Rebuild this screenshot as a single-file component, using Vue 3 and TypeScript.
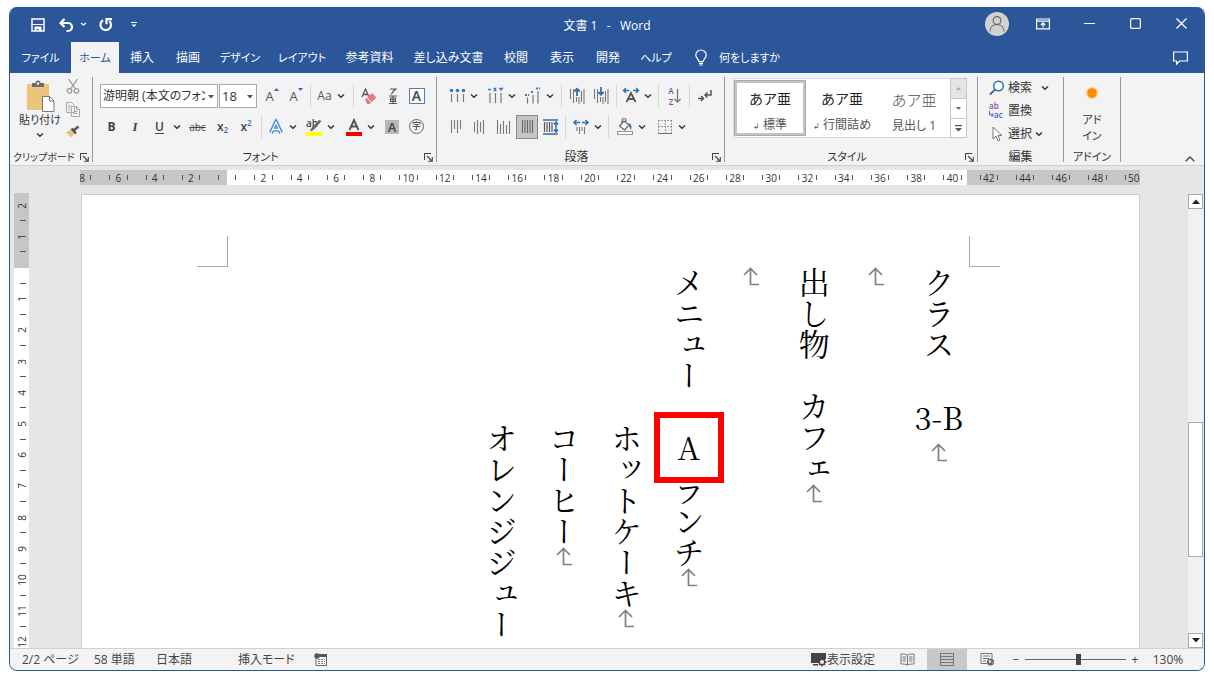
<script setup lang="ts">
import { ref } from 'vue'

interface Column { indent: boolean; parts: { text: string; kind?: 'upright' | 'marked' }[]; end: boolean }

const tabs = ['ファイル', 'ホーム', '挿入', '描画', 'デザイン', 'レイアウト', '参考資料', '差し込み文書', '校閲', '表示', '開発', 'ヘルプ']
const activeTab = ref('ホーム')
const zoom = ref(53)

const isKana = (s: string) => /^[ァ-ー]+$/.test(s)

const hMarks = Array.from({ length: 30 }, (_, i) => Math.abs(i * 2 - 8))
const vMarks = Array.from({ length: 15 }, (_, i) => Math.abs(i - 2))

const columns: Column[] = [
  { indent: false, parts: [{ text: 'クラス　' }, { text: '3-B', kind: 'upright' }], end: true },
  { indent: false, parts: [], end: true },
  { indent: false, parts: [{ text: '出し物　カフェ' }], end: true },
  { indent: false, parts: [], end: true },
  { indent: false, parts: [{ text: 'メニュー　' }, { text: 'A', kind: 'marked' }, { text: 'ランチ' }], end: true },
  { indent: true, parts: [{ text: 'ホットケーキ' }], end: true },
  { indent: true, parts: [{ text: 'コーヒー' }], end: true },
  { indent: true, parts: [{ text: 'オレンジジュー' }], end: false },
]
</script>

<template>
  <svg class="defs" aria-hidden="true">
    <symbol id="chev" viewBox="0 0 8 6"><path d="M1 1.5L4 4.300L7 1.500" fill="none" stroke="#333" stroke-width="1.400" /></symbol>
    <symbol id="launch" viewBox="0 0 9 9"><path d="M.5 7V.5H7M3 3l5 5M8.300 4v4.300H4" fill="none" stroke="#444" stroke-width="1.100" /></symbol>
    <symbol id="ret" viewBox="0 0 18 20"><path d="M2 8L8.500 1.500L15 8M8.500 2V17.500H17" fill="none" stroke="#808080" stroke-width="1.700" /></symbol>
    <symbol id="tri" viewBox="0 0 6 4"><path d="M0 0h6L3 3.500z" fill="#555" /></symbol>
  </svg>
  <div class="window">
    <header class="title">
      <div class="quick">
        <button aria-label="上書き保存"><svg width="14" height="14" viewBox="0 0 14 14"><path d="M1 1h12v12H1z" fill="none" stroke="#fff" stroke-width="1.500" /><path d="M3.500 8.500h7V13h-3v-2h-2v2h-2z" fill="#fff" /><path d="M1.500 6.500h11" stroke="#fff" /></svg></button>
        <button class="undo" aria-label="元に戻す"><svg width="15" height="14" viewBox="0 0 15 14"><path d="M5.500 1L1.500 5l4 4M2 5h7a4 4 0 0 1 0 8H7.500" fill="none" stroke="#fff" stroke-width="2.200" /></svg><svg width="7" height="5" viewBox="0 0 7 5"><path d="M1 1l2.500 2L6 1" fill="none" stroke="#fff" stroke-width="1.200" /></svg></button>
        <button aria-label="繰り返し"><svg width="14" height="14" viewBox="0 0 14 14"><path d="M4 2.200A5.300 5.300 0 1 0 10.500 3M7.500 6.200V1.200H13" fill="none" stroke="#fff" stroke-width="2.200" /></svg></button>
        <button aria-label="カスタマイズ"><svg width="6" height="6" viewBox="0 0 6 6"><path d="M0 0h6v1H0zM.5 2.500h5L3 5z" fill="#fff" /></svg></button>
      </div>
      <h1>文書 1 &nbsp;&nbsp;-&nbsp;&nbsp; Word</h1>
      <div class="controls">
        <button class="user" aria-label="アカウント"><svg width="24" height="24" viewBox="0 0 24 24"><circle cx="12" cy="12" r="12" fill="#d2d2d2" /><circle cx="12" cy="8.500" r="3.900" fill="none" stroke="#666" stroke-width="1.100" /><path d="M5 19.500c0-4.500 3-7 7-7s7 2.500 7 7" fill="none" stroke="#666" stroke-width="1.100" /></svg></button>
        <button aria-label="リボンの表示オプション"><svg width="14" height="12" viewBox="0 0 14 12"><path d="M.6 1h12.800v9.800H.6zM.6 3.200h12.800M7 9.500V5M4.800 7L7 4.800L9.200 7" fill="none" stroke="#fff" stroke-width="1.200" /></svg></button>
        <button aria-label="最小化"><svg width="11" height="11" viewBox="0 0 11 11"><path d="M0 5.500h11" stroke="#fff" stroke-width="1.200" /></svg></button>
        <button aria-label="最大化"><svg width="11" height="11" viewBox="0 0 11 11"><rect x=".6" y=".6" width="9.800" height="9.800" rx="1.500" fill="none" stroke="#fff" stroke-width="1.200" /></svg></button>
        <button aria-label="閉じる"><svg width="11" height="11" viewBox="0 0 11 11"><path d="M.5.5l10 10M10.500.5l-10 10" stroke="#fff" stroke-width="1.300" /></svg></button>
      </div>
    </header>

    <nav class="tabs">
      <button v-for="t in tabs" :key="t" :class="{ active: t === activeTab, kana: isKana(t) }" @click="activeTab = t">{{ t }}</button>
      <button class="tell kana"><svg width="12" height="16" viewBox="0 0 12 16"><path d="M3.800 11.500C3.800 9 .8 8 .8 5.200a5.200 5.200 0 0 1 10.400 0C11.200 8 8.200 9 8.200 11.500zM4 13.300h4M4.500 15h3" fill="none" stroke="#fff" stroke-width="1.200" /></svg>何をしますか</button>
      <button class="comment" aria-label="コメント"><svg width="15" height="14" viewBox="0 0 15 14"><path d="M.6 1h13.800v9H6.500L3.600 13v-3h-3z" fill="none" stroke="#fff" stroke-width="1.200" /></svg></button>
    </nav>

    <section class="ribbon" aria-label="リボン">
      <div class="group clip">
        <div class="body clipbody">
          <button class="paste kana">
            <svg width="30" height="32" viewBox="0 0 30 32"><path d="M2 4h22v26H2z" fill="#ecc47c" /><path d="M7 3h3.500a2.500 2.500 0 0 1 5 0H19v4H7z" fill="#6d6d6d" /><circle cx="13" cy="3.500" r="1.200" fill="#f3f3f3" /><path d="M17.500 16.500h7l4.500 4.500v10.500H17.500z" fill="#fff" stroke="#777" /><path d="M24.500 16.500V21H29" fill="none" stroke="#777" /></svg>
            <span>貼り付け</span>
            <svg width="8" height="6"><use href="#chev" /></svg>
          </button>
          <div class="cliptools">
            <button aria-label="切り取り"><svg width="14" height="15" viewBox="0 0 14 15"><path d="M2.500 0l7 10M11.500 0l-7 10" stroke="#999" stroke-width="1.300" /><circle cx="3.500" cy="11.800" r="2.300" fill="none" stroke="#999" stroke-width="1.200" /><circle cx="10.500" cy="11.800" r="2.300" fill="none" stroke="#999" stroke-width="1.200" /></svg></button>
            <button aria-label="コピー"><svg width="14" height="15" viewBox="0 0 14 15"><path d="M.5.5h5l3 3v7h-8zM5.500 4.500h5l3 3v7h-8z" fill="#f3f3f3" stroke="#a8a8a8" /><path d="M10.500 4.500v3h3M7.500 9.500h4M7.500 11.500h4M2 4h3M2 6h2M2 8h2" fill="none" stroke="#a8a8a8" /></svg></button>
            <button aria-label="書式のコピー"><svg width="15" height="13" viewBox="0 0 15 13"><path d="M1 7.500L6 4.500l3.500 4L6 12.500z" fill="#ecc47c" /><path d="M6.500 3.500l4.500 5M8.500 5.500l5-4" stroke="#555" stroke-width="2.500" /></svg></button>
          </div>
        </div>
        <div class="label"><span>クリップボード</span><button class="launch" aria-label="クリップボードの設定"><svg width="9" height="9"><use href="#launch" /></svg></button></div>
      </div>

      <div class="group font">
        <div class="body rows">
          <div class="row f1">
            <div class="combo name"><select aria-label="フォント"><option>游明朝 (本文のフォント - 日本語)</option></select><svg width="6" height="4"><use href="#tri" /></svg></div>
            <div class="combo size"><select aria-label="フォント サイズ"><option>18</option></select><svg width="6" height="4"><use href="#tri" /></svg></div>
            <button aria-label="フォント サイズの拡大" class="grow">A<svg width="5" height="3" viewBox="0 0 5 3"><path d="M0 3L2.500 0L5 3z" fill="#2f6eb5" /></svg></button>
            <button aria-label="フォント サイズの縮小" class="grow shrink">A<svg width="5" height="3" viewBox="0 0 5 3"><path d="M0 0L2.500 3L5 0z" fill="#2f6eb5" /></svg></button>
            <i class="sep"></i>
            <button class="aa">Aa<svg width="8" height="6"><use href="#chev" /></svg></button>
            <i class="sep"></i>
            <button aria-label="書式のクリア"><svg width="17" height="18" viewBox="0 0 17 18"><path d="M1 10L4.500 2L8 10M2.200 7.500h4.600" fill="none" stroke="#555" stroke-width="1.300" /><path d="M4 12.500L11 6l4.500 4.500l-7 6.500H6z" fill="#e8798b" /><path d="M6 10.700l4.300 4.500" stroke="#f3f3f3" /></svg></button>
            <button aria-label="ルビ"><svg width="12" height="18" viewBox="0 0 12 18"><path d="M3 2h6L6 4.500M6 3.500v2L4 7M2 9h8M2 16.500h8M3.500 11h5v3.500h-5zM3.500 12.700h5M6 9v7.500" fill="none" stroke="#555" stroke-width="1.100" /></svg></button>
            <button aria-label="囲み線"><b class="boxed">A</b></button>
          </div>
          <div class="row f2">
            <button class="bold">B</button><button class="ital">I</button>
            <button class="dd"><span class="under">U</span><svg width="8" height="6"><use href="#chev" /></svg></button>
            <button class="strike">abc</button>
            <button class="xx">x<sub>2</sub></button><button class="xx">x<sup>2</sup></button>
            <i class="sep"></i>
            <button class="dd" aria-label="文字の効果"><svg width="18" height="18" viewBox="0 0 18 18"><path d="M4 15L9 4L14 15M6 11.500h6" fill="none" stroke="#b5d0ef" stroke-width="5" stroke-linejoin="round" /><path d="M4 15L9 4L14 15M6 11.500h6" fill="none" stroke="#3c7fd0" stroke-width="3.400" /><path d="M4 15L9 4L14 15M6 11.500h6" fill="none" stroke="#fff" stroke-width="1.300" /></svg><svg width="8" height="6"><use href="#chev" /></svg></button>
            <button class="dd" aria-label="蛍光ペンの色"><svg width="18" height="18" viewBox="0 0 18 18"><rect x="1" y="14" width="16" height="4" fill="#ff0" /><text x="1" y="9" font-size="10" font-weight="600" fill="#444">ab</text><path d="M16.500 3L10 10.500L7 13H5l1.500-3L14 2z" fill="#666" /></svg><svg width="8" height="6"><use href="#chev" /></svg></button>
            <button class="dd" aria-label="フォントの色"><svg width="18" height="18" viewBox="0 0 18 18"><rect x="1" y="14" width="16" height="4" fill="#f00000" /><path d="M4.500 12L9 2L13.500 12M6 8.500h6" fill="none" stroke="#555" stroke-width="1.900" /></svg><svg width="8" height="6"><use href="#chev" /></svg></button>
            <button aria-label="文字の網かけ"><b class="shade">A</b></button>
            <button aria-label="囲い文字"><span class="circle">字</span></button>
          </div>
        </div>
        <div class="label kana"><span>フォント</span><button class="launch" aria-label="フォントの設定"><svg width="9" height="9"><use href="#launch" /></svg></button></div>
      </div>

      <div class="group para">
        <div class="body rows">
          <div class="row p1">
            <button class="dd" aria-label="箇条書き"><svg width="18" height="18" viewBox="0 0 18 18"><circle cx="3.500" cy="3.500" r="1.800" fill="#3b78be" /><circle cx="9.500" cy="3.500" r="1.800" fill="#3b78be" /><circle cx="15.500" cy="3.500" r="1.800" fill="#3b78be" /><path d="M3.500 7v8M9.500 7v8M15.500 7v8" stroke="#777" stroke-width="1.200" /></svg><svg width="8" height="6"><use href="#chev" /></svg></button>
            <button class="dd" aria-label="段落番号"><svg width="18" height="18" viewBox="0 0 18 18"><path d="M2 2.500h3M7.500 1.500h2l-1 2h2M13 1.500h3l-1.500 2" fill="none" stroke="#3b78be" stroke-width="1.500" /><path d="M4 6v10M9.500 6v10M15 6v10" stroke="#777" stroke-width="1.200" /></svg><svg width="8" height="6"><use href="#chev" /></svg></button>
            <button class="dd" aria-label="アウトライン"><svg width="18" height="18" viewBox="0 0 18 18"><path d="M1 8h4M7 5h3M12 1.500h4" fill="none" stroke="#3b78be" stroke-width="2" stroke-dasharray="2 1" /><path d="M3.500 10.500v6M9 8v8.500M14 4v12.500" stroke="#777" stroke-width="1.200" /></svg><svg width="8" height="6"><use href="#chev" /></svg></button>
            <i class="sep"></i>
            <button aria-label="インデントを減らす"><svg width="16" height="18" viewBox="0 0 16 18"><path d="M1.500 2v10M4.500 2v14M7.500 10v5M10 10v7M12.500 4v11M15 2v15" stroke="#777" stroke-width="1.100" /><path d="M8 9V2M5.300 4.500L8 1.800l2.700 2.700" fill="none" stroke="#2f6eb5" stroke-width="1.800" /></svg></button>
            <button aria-label="インデントを増やす"><svg width="16" height="18" viewBox="0 0 16 18"><path d="M1.500 2v10M4.500 2v14M7.500 10v5M10 10v7M12.500 4v11M15 2v15" stroke="#777" stroke-width="1.100" /><path d="M8 0v7.500M5.300 5L8 7.700L10.700 5" fill="none" stroke="#2f6eb5" stroke-width="1.800" /></svg></button>
            <i class="sep"></i>
            <button class="dd" aria-label="拡張書式"><svg width="18" height="18" viewBox="0 0 18 18"><path d="M4.500 15L9 6L13.500 15M6 12h6" fill="none" stroke="#555" stroke-width="1.800" /><path d="M7 3.500H2M4 1L1.500 3.500L4 6M11 3.500h5M14 1l2.500 2.500L14 6" fill="none" stroke="#2f6eb5" stroke-width="1.400" /></svg><svg width="8" height="6"><use href="#chev" /></svg></button>
            <i class="sep"></i>
            <button aria-label="並べ替え"><span class="az"><span>A</span><span>Z</span></span><svg width="7" height="16" viewBox="0 0 7 16"><path d="M3.500 1v13M.5 11l3 3l3-3" fill="none" stroke="#777" stroke-width="1.300" /></svg></button>
            <i class="sep"></i>
            <button aria-label="編集記号の表示"><svg width="15" height="14" viewBox="0 0 15 14"><path d="M14 1v5H8.500M10.500 3.500L8 6l2.500 2.500M1 9.500h5M4 7l2.500 2.500L4 12" fill="none" stroke="#555" stroke-width="1.500" /></svg></button>
          </div>
          <div class="row p2">
            <button aria-label="上揃え"><svg width="12" height="16" viewBox="0 0 12 16"><path d="M1.500 1v13M4.500 1v9M7.500 1v13M10.500 1v9" stroke="#777" stroke-width="1.100" /></svg></button>
            <button aria-label="上下中央揃え"><svg width="12" height="16" viewBox="0 0 12 16"><path d="M1.500 3v10M4.500 1v14M7.500 3v10M10.500 1v14" stroke="#777" stroke-width="1.100" /></svg></button>
            <button aria-label="下揃え"><svg width="15" height="16" viewBox="0 0 15 16"><path d="M1.500 1v14M4.500 5v10M7.500 2v13M10.500 6v9M13.500 2v13" stroke="#777" stroke-width="1.100" /></svg></button>
            <button class="picked" aria-label="両端揃え" aria-pressed="true"><svg width="13" height="14" viewBox="0 0 13 14"><path d="M1.500 0v13M4 0v13M6.500 0v13M9 0v13M11.500 0v13" stroke="#666" stroke-width="1.100" /></svg></button>
            <button aria-label="均等割り付け"><svg width="16" height="16" viewBox="0 0 16 16"><path d="M0 1h15M0 15h15" stroke="#2f6eb5" stroke-width="1.300" /><path d="M1.500 3v10M4 3v10M6.500 3v10M9 3v10" stroke="#555" stroke-width="1.200" /><path d="M13 3v10M11 5.500L13 3l2 2.500M11 10.500l2 2.500l2-2.500" fill="none" stroke="#2f6eb5" stroke-width="1.500" /></svg></button>
            <i class="sep"></i>
            <button class="dd" aria-label="行と段落の間隔"><svg width="18" height="18" viewBox="0 0 18 18"><path d="M8 4.500H2M4.500 2L2 4.500L4.500 7M10 4.500h6M13.500 2L16 4.500L13.500 7" fill="none" stroke="#2f6eb5" stroke-width="1.500" /><path d="M5 9v4M7.500 9v7M10 9v4M12.500 9v7" stroke="#777" stroke-width="1.100" /></svg><svg width="8" height="6"><use href="#chev" /></svg></button>
            <i class="sep"></i>
            <button class="dd" aria-label="塗りつぶし"><svg width="18" height="18" viewBox="0 0 18 18"><path d="M8 3L3.500 8L8.500 12L13 7zM6 6V2.500a2 2 0 0 1 4 0V5" fill="#fff" stroke="#666" stroke-width="1.200" /><path d="M12.500 5c3 1 3.500 3.500 2.500 7c-1-2-2-3-2-5z" fill="#2f6eb5" /><rect x="1.500" y="13.500" width="15" height="3" fill="#fff" stroke="#999" /></svg><svg width="8" height="6"><use href="#chev" /></svg></button>
            <button class="dd" aria-label="罫線"><svg width="18" height="18" viewBox="0 0 18 18"><path d="M2.500 2v13M9.500 2v13M15.500 2v13M2 2.500h14M2 8.500h14" fill="none" stroke="#999" stroke-dasharray="2 1" /><path d="M2 15.500h14" stroke="#777" /></svg><svg width="8" height="6"><use href="#chev" /></svg></button>
          </div>
        </div>
        <div class="label"><span>段落</span><button class="launch" aria-label="段落の設定"><svg width="9" height="9"><use href="#launch" /></svg></button></div>
      </div>

      <div class="group styles">
        <div class="body">
          <div class="gallery">
            <button class="style on"><span class="sample">あア亜</span><span><small>↲</small> 標準</span></button>
            <button class="style"><span class="sample">あア亜</span><span><small>↲</small> 行間詰め</span></button>
            <button class="style"><span class="sample head">あア亜</span><span>見出し 1</span></button>
            <div class="spin">
              <button class="off" aria-label="前の行"><svg width="5" height="3" viewBox="0 0 5 3"><path d="M0 3L2.500 0L5 3z" fill="#aaa" /></svg></button>
              <button aria-label="次の行"><svg width="5" height="3" viewBox="0 0 5 3"><path d="M0 0L2.500 3L5 0z" fill="#666" /></svg></button>
              <button aria-label="その他"><svg width="7" height="7" viewBox="0 0 7 7"><path d="M0 0h7v1.200H0zM0 3h7L3.500 6.500z" fill="#555" /></svg></button>
            </div>
          </div>
        </div>
        <div class="label kana"><span>スタイル</span><button class="launch" aria-label="スタイルの設定"><svg width="9" height="9"><use href="#launch" /></svg></button></div>
      </div>

      <div class="group edit">
        <div class="body editbody">
          <button><svg width="17" height="16" viewBox="0 0 17 16"><circle cx="10.500" cy="6" r="4.800" fill="#fff" stroke="#2f6eb5" stroke-width="1.500" /><path d="M7 9.500L2 14.500" stroke="#2f6eb5" stroke-width="1.800" /></svg>検索<svg class="far" width="8" height="6"><use href="#chev" /></svg></button>
          <button><svg width="17" height="20" viewBox="0 0 17 20"><text x="1" y="8" font-size="8" font-weight="600" fill="#8b4aa8">ab</text><text x="6" y="17" font-size="8" font-weight="600" fill="#2f6eb5">ac</text><path d="M1.500 10v4H5M3.500 12l2 2l-2 2" fill="none" stroke="#2f6eb5" /></svg>置換</button>
          <button><svg width="17" height="16" viewBox="0 0 17 16"><path d="M5 1v12l3-3l2 5l2-1l-2-4.500h4z" fill="#fff" stroke="#777" /></svg>選択<svg width="8" height="6"><use href="#chev" /></svg></button>
        </div>
        <div class="label"><span>編集</span></div>
      </div>

      <div class="group addin kana">
        <div class="body"><button class="addbtn"><svg width="12" height="12" viewBox="0 0 12 12"><circle cx="6" cy="6" r="6" fill="#fbd49a" /><circle cx="6" cy="6" r="4.800" fill="#ff8c00" /></svg><span>アド<br>イン</span></button></div>
        <div class="label"><span>アドイン</span></div>
      </div>
      <button class="collapse" aria-label="リボンを折りたたむ"><svg width="10" height="6" viewBox="0 0 10 6"><path d="M.7 5.300L5 1l4.300 4.300" fill="none" stroke="#444" stroke-width="1.300" /></svg></button>
    </section>

    <main class="work">
      <div class="hruler" aria-hidden="true">
        <div class="hcells"><div v-for="(n, i) in hMarks" :key="i" :class="{ first: i === 0, last: i === 29 }"><i></i><span>{{ n || '' }}</span><i></i></div></div>
      </div>
      <div class="vruler" aria-hidden="true">
        <div class="vcells"><div v-for="(n, i) in vMarks" :key="i"><span>{{ n || '' }}</span><i></i></div></div>
      </div>
      <article class="page">
        <div class="crop left"></div>
        <div class="crop right"></div>
        <div class="text">
          <p v-for="(c, i) in columns" :key="i" :class="{ indent: c.indent }"><span v-for="(p, j) in c.parts" :key="j" :class="p.kind">{{ p.text }}</span><svg v-if="c.end" width="18" height="20"><use href="#ret" /></svg></p>
        </div>
      </article>
      <div class="scroll">
        <button aria-label="上へスクロール"><svg width="8" height="5" viewBox="0 0 8 5"><path d="M0 5L4 0.500L8 5z" fill="#222" /></svg></button>
        <div class="track"><div class="thumb"></div></div>
        <button aria-label="下へスクロール"><svg width="8" height="5" viewBox="0 0 8 5"><path d="M0 0L4 4.500L8 0z" fill="#222" /></svg></button>
      </div>
    </main>

    <footer class="status">
      <button class="pages">2/2 ページ</button><button class="words">58 単語</button><button class="lang">日本語</button><button class="mode">挿入モード</button>
      <button aria-label="マクロの記録"><svg width="13" height="13" viewBox="0 0 13 13"><path d="M2 3.500h10.500v9H2z" fill="#fff" stroke="#666" /><path d="M5 1h8v3H5z" fill="#555" /><circle cx="3" cy="3" r="2.700" fill="#555" /><path d="M4 6.500h7M4 8.500h7M4 10.500h7" stroke="#777" stroke-dasharray="2 1" /></svg></button>
      <div class="views">
        <button class="disp"><svg width="16" height="15" viewBox="0 0 16 15"><path d="M0 1h15v6H8v4H0zM2 12h5v1.500H2z" fill="#444" /><circle cx="11" cy="10" r="2.800" fill="#f3f3f3" stroke="#444" stroke-width="1.500" /><path d="M11 5.500v2M11 12.500v2M6.500 10h2M13.500 10h2M8 7l1 1M13 12l1 1M14 7l-1 1M9 12l-1 1" stroke="#444" stroke-width="1.400" /></svg>表示設定</button>
        <button class="view" aria-label="閲覧モード"><svg width="15" height="13" viewBox="0 0 15 13"><path d="M7.500 2C6 1 3 1 1 1v10c2 0 5 0 6.500 1C9 11 12 11 14 11V1c-2 0-5 0-6.500 1zM7.500 2v10" fill="none" stroke="#777" /><path d="M2.500 4H6M2.500 6H6M2.500 8H6M9 4h3.500M9 6h3.500M9 8h3.500" stroke="#777" /></svg></button>
        <button class="view cur" aria-label="印刷レイアウト"><svg width="14" height="13" viewBox="0 0 14 13"><path d="M0 .5h14M0 3.500h14M0 6.500h14M0 9.500h14M0 12.500h14M.5 0v13M13.500 0v13" stroke="#777" /></svg></button>
        <button class="view" aria-label="Web レイアウト"><svg width="15" height="13" viewBox="0 0 15 13"><path d="M7 10.500H1V.5h11v5M3 3h7M3 5.500h6M3 8h3" fill="none" stroke="#777" /><circle cx="10.500" cy="9" r="3.500" fill="#666" /><path d="M9 7.500l2 .5l-1 2zM12 9.500l1 .5" fill="#f3f3f3" stroke="#f3f3f3" stroke-width=".7" /></svg></button>
        <button class="pm" aria-label="縮小">−</button>
        <input v-model.number="zoom" type="range" min="0" max="100" aria-label="ズーム">
        <button class="pm" aria-label="拡大">+</button>
        <button class="pct">130%</button>
      </div>
    </footer>
  </div>
</template>

<style>
body { background: #fff; }
</style>

<style scoped>
* { box-sizing: border-box; }
button { margin: 0; padding: 0; border: 0; background: none; color: inherit; font: inherit; font-feature-settings: inherit; display: flex; align-items: center; justify-content: center; white-space: nowrap; }
svg { flex: none; overflow: visible; }
.defs { position: absolute; width: 0; height: 0; }
.window { margin: 7px 9px 0; height: calc(100vh - 13px); display: flex; flex-direction: column; overflow: hidden; border: 1px solid #2b579a; border-top: 0; border-radius: 8px; background: #e6e6e6; color: #333; font: 12px/16px "Open Sans", "Noto Sans CJK JP", sans-serif; font-feature-settings: "palt"; }

.title { flex: none; display: grid; grid-template-columns: 1fr auto 1fr; height: 35px; background: #2b579a; color: #fff; }
.title h1 { margin: 0; padding-top: 11px; font-size: 12px; line-height: 16px; font-weight: 400; }
.quick { display: flex; gap: 12px; padding-left: 21px; align-items: center; }
.quick button { height: 20px; }
.undo { gap: 6px; padding-left: 2px; }
.quick button:last-child { padding-left: 6px; }
.controls { display: flex; justify-content: flex-end; padding-bottom: 2px; }
.controls button { width: 46px; }

.kana { font-size: 11px; }
.tabs { flex: none; display: grid; grid-template-columns: 61px 48px 46px 46px 58px 66px 69px 89px 46px 46px 46px 50px auto 1fr; height: 31px; background: #2b579a; color: #fff; }
.tabs .active { background: #f3f3f3; color: #2b579a; }
.tell { gap: 12px; padding-left: 14px; }
.comment { justify-content: flex-end; padding-right: 16px; }

.ribbon { flex: none; display: flex; height: 93px; padding: 4px 0 3px; background: #f3f3f3; border-bottom: 1px solid #d0d0d0; }
.group { display: flex; flex-direction: column; border-right: 1px solid #999; }
.clip { width: 83px; } .font { width: 344px; } .para { width: 288px; } .styles { width: 253px; } .edit { width: 86px; } .addin { width: 57px; }
.body { flex: none; height: 68px; }
.label { flex: 1; min-height: 0; display: flex; align-items: center; justify-content: center; padding: 6px 8px 0 0; position: relative; }
.edit .label, .addin .label { padding-right: 0; }
.launch { position: absolute; right: 3px; bottom: 0; }
.clip .label { justify-content: flex-start; padding-left: 3px; font-size: 10px; }
.clipbody { display: flex; padding-left: 6px; }
.paste { flex-direction: column; width: 48px; justify-content: flex-start; padding-top: 3px; }
.paste svg:last-child { margin-top: 4px; }
.cliptools { display: flex; flex-direction: column; gap: 8px; padding: 2px 0 0 1px; }
.rows { padding: 3px 0 0 7px; }
.row { display: grid; height: 31px; align-items: center; }
.row button { height: 24px; }
.f1 { grid-template-columns: 119px 39px 28px 20px 8px 34px 10px 23px 24px 23px; }
.f2 { grid-template-columns: 23px 24px 37px 27px 23px 24px 6px 35px 41px 39px 26px 23px; }
.p1 { grid-template-columns: 37px 39px 38px 6px 25px 24px 6px 36px 7px 25px 5px 24px; }
.p2 { grid-template-columns: 23px 24px 25px 22px 25px 5px 38px 5px 40px 40px; }
.sep { width: 1px; height: 22px; background: #d5d5d5; justify-self: center; }
.combo { position: relative; height: 24px; border: 1px solid #aaa; background: #fff; display: flex; margin-right: 1px; }
.combo select { appearance: none; flex: 1; min-width: 0; border: 0; margin: 0 12px 0 0; padding: 0 0 0 2px; background: none; color: #333; font: inherit; font-feature-settings: inherit; text-overflow: clip; overflow: hidden; }
.size select { font-size: 13px; margin-right: 8px; }
.combo svg { position: absolute; right: 3px; top: 10px; }
.grow { font-size: 13px; color: #555; gap: 0; }
.grow svg { margin-bottom: 12px; }
.aa { gap: 5px; color: #555; }
.boxed { width: 16px; height: 16px; border: 1px solid #4a7fc1; font: 600 14px/14px "Open Sans", sans-serif; color: #444; background: #fff; }
.bold { font-weight: 700; } .ital { font: italic 700 13px "Liberation Serif", serif; }
.bold, .ital, .under { color: #444; }
.dd { gap: 4px; }
.under { width: 18px; text-align: center; text-decoration: underline; text-underline-offset: 2px; font-weight: 600; }
.strike { font-size: 10px; text-decoration: line-through; color: #444; }
.xx { font-weight: 600; color: #444; }
.xx sub, .xx sup { font-size: 8px; line-height: 8px; color: #2f6eb5; }
.xx sub { margin-top: 7px; } .xx sup { margin-bottom: 8px; }
.az { display: grid; font-size: 8px; line-height: 11px; font-weight: 600; color: #2f6eb5; }
.az span + span { color: #8b4aa8; }
.shade { width: 14px; height: 14px; background: #b8b8b8; font-size: 13px; line-height: 14px; font-weight: 600; color: #444; }
.circle { width: 15px; height: 15px; border: 1px solid #666; border-radius: 50%; font-size: 9px; line-height: 12px; }
.row .picked { background: #c5c5c5; border: 1px solid #8a8a8a; }

.styles .body { padding: 1px 0 0 8px; }
.gallery { display: flex; width: 234px; height: 60px; border: 1px solid #dadada; background: #fff; }
.style { width: 72px; flex-direction: column; gap: 9px; margin: 1px 0; padding-top: 8px; color: #555; }
.on { border: 3px solid #c4c4c4; outline: 1px solid #aaa; outline-offset: -1px; }
.style small { font-size: 8px; }
.sample { font-size: 14px; line-height: 18px; color: #222; font-feature-settings: normal; }
.head { font-size: 15px; font-weight: 300; color: #555; }
.spin { flex: 1; display: grid; grid-template-rows: 1fr 1fr 1fr; margin: -1px -1px -1px 0; }
.spin button { border: 1px solid #c8c8c8; margin-bottom: -1px; background: #fff; }
.spin .off { background: #e4e4e4; }
.spin button:last-child { margin-bottom: 0; }
.editbody { display: flex; flex-direction: column; padding: 0 0 0 10px; align-items: flex-start; }
.editbody button { height: 23px; gap: 3px; }
.far { margin-left: 6px; }
.addbtn { flex-direction: column; width: 100%; gap: 13px; padding-top: 10px; }
.addbtn span { line-height: 16px; }
.collapse { margin-left: auto; align-self: flex-end; padding: 0 9px 0 0; }

.work { flex: 1; min-height: 0; display: grid; grid-template-columns: 4px 15px 52px 1fr 48px 15px 1px; grid-template-rows: 28px minmax(0, 1fr); overflow: hidden; }
.hruler { grid-column: 3 / 5; grid-row: 1; margin: 4px 0 0 51px; height: 15px; overflow: hidden; background: linear-gradient(to right, #c6c6c6 147px, #fff 147px, #fff 887px, #c6c6c6 887px); }
.hcells { width: 1088px; margin-left: -16px; display: flex; height: 15px; }
.hcells div { flex: 1; display: flex; justify-content: space-between; align-items: center; padding: 0 9px; }
.hcells .first i:first-child, .hcells .last i:last-child { visibility: hidden; }
.hcells i { width: 1px; height: 5px; background: #555; }
.hcells span, .vcells span { font-size: 10px; line-height: 12px; }
.vruler { grid-column: 2; grid-row: 2; overflow: hidden; background: linear-gradient(#c6c6c6 75px, #fff 75px); margin-top: -1px; }
.vcells { height: 468px; margin-top: -3px; display: flex; flex-direction: column; }
.vcells div { flex: 1; min-height: 0; display: flex; align-items: center; justify-content: center; position: relative; }
.vcells span { transform: rotate(-90deg); }
.vcells i { position: absolute; bottom: 0; left: 6px; width: 6px; height: 1px; background: #555; }
.page { grid-column: 4; grid-row: 2; position: relative; background: #fff; border: 1px solid #cfcfcf; border-bottom: 0; padding: 72px 169px 0 0; overflow: hidden; }
.crop { position: absolute; top: 41px; width: 31px; height: 31px; border-bottom: 1px solid #aaa; }
.crop.left { left: 115px; border-right: 1px solid #aaa; }
.crop.right { right: 139px; border-left: 1px solid #aaa; }
.text { width: 500px; margin-left: auto; display: flex; flex-direction: row-reverse; font: 400 31px/62px "Yu Mincho", "Noto Serif CJK JP", "Liberation Serif", "Noto Sans CJK JP", serif; font-feature-settings: normal; color: #000; }
.text p { flex: 1; min-width: 0; margin: 0; writing-mode: vertical-rl; white-space: nowrap; display: flex; align-items: center; }
.text .indent { padding-top: 156px; }
.upright, .marked { writing-mode: horizontal-tb; text-align: center; line-height: 52px; }
.marked { width: 70px; height: 71px; margin: -10px 0 -8px; border: 6px solid #f00; line-height: 58px; background: #fff; position: relative; z-index: 1; }
.scroll { grid-column: 6; grid-row: 2; display: flex; flex-direction: column; background: #f1f1f1; }
.scroll button { flex: none; height: 15px; border: 1px solid #aaa; background: #fff; }
.track { flex: 1; padding-top: 213px; }
.thumb { height: 135px; border: 1px solid #aaa; background: #fff; }

.status { flex: none; display: flex; align-items: stretch; height: 22px; padding-left: 12px; border-top: 1px solid #d0d0d0; background: #f3f3f3; color: #444; }
.status > button { justify-content: flex-start; }
.pages { width: 72px; } .words { width: 62px; } .lang { width: 82px; } .mode { width: 76px; }
.views { margin-left: auto; display: flex; align-items: stretch; }
.disp { margin-right: 12px; }
.view { width: 40px; }
.cur { background: #c8c8c8; }
.pm { width: 18px; }
.views input { appearance: none; width: 101px; margin: 0; background: linear-gradient(#666, #666) center / 100% 1px no-repeat; }
.views input::-webkit-slider-thumb { appearance: none; width: 5px; height: 11px; background: #444; }
.pct { width: 60px; padding-right: 12px; }
</style>
